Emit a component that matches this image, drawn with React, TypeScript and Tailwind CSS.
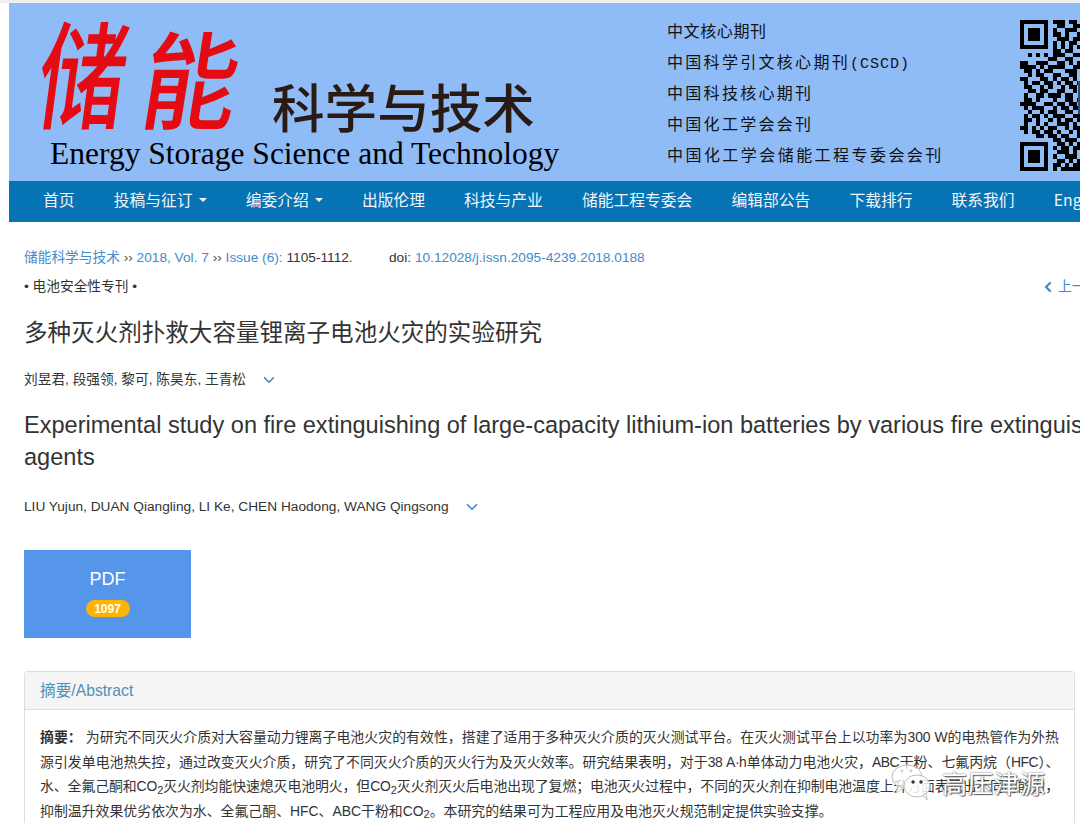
import { ChevronDown, ChevronLeft } from 'lucide-react';

const sansCn = 'font-["Liberation_Sans","Noto_Sans_CJK_SC",sans-serif]';

const navItems = [
  { label: '首页' },
  { label: '投稿与征订', caret: true },
  { label: '编委介绍', caret: true },
  { label: '出版伦理' },
  { label: '科技与产业' },
  { label: '储能工程专委会' },
  { label: '编辑部公告' },
  { label: '下载排行' },
  { label: '联系我们' },
  { label: 'English' },
];

// visible part of the QR code, the rest is cut off by the window
const qrRows = [
  '111111101110110',
  '100000100110011',
  '101110101001110',
  '101110101101001',
  '101110100111011',
  '100000101010110',
  '111111101010101',
  '000000001101100',
  '001010101110011',
  '000000011001100',
  '110011100110101',
  '111101011110011',
  '011010110001110',
  '001011001100110',
  '110001101011010',
  '010110110101101',
  '011001010010110',
  '001101100110010',
  '010011011101100',
  '011010001001101',
  '111100110110110',
  '010111001011011',
  '001001011001100',
  '010110101110011',
  '011010010101101',
  '010010100111010',
  '110101011001011',
  '010110110100101',
  '000011011011001',
  '000000001101110',
  '111111100110101',
  '100000101011011',
  '101110100111010',
  '101110101001110',
  '101110100110101',
  '100000101101011',
  '111111101011111',
];

function QrCode() {
  return (
    <svg width="61" height="151" viewBox="0 0 15 37" shapeRendering="crispEdges" className="shrink-0">
      {qrRows.map((row, y) =>
        row.split('').map((c, x) =>
          c === '1' ? <rect key={`${x}-${y}`} x={x} y={y} width="1" height="1" fill="#000" /> : null
        )
      )}
      <rect x="14.2" y="15" width="0.8" height="8" fill="#1f4f86" />
    </svg>
  );
}

function WechatMark() {
  return (
    <svg width="46" height="40" viewBox="0 0 46 40">
      <ellipse cx="19" cy="15" rx="15" ry="12" fill="#ffffff" fillOpacity="0.75" stroke="#bdbdbd" strokeWidth="1" />
      <path d="M10 24 L8 31 L16 26 Z" fill="#ffffff" fillOpacity="0.75" stroke="#bdbdbd" strokeWidth="1" />
      <ellipse cx="29" cy="24" rx="13" ry="11" fill="#ffffff" fillOpacity="0.85" stroke="#bdbdbd" strokeWidth="1" />
      <path d="M35 33 L39 38 L38 31 Z" fill="#ffffff" fillOpacity="0.85" stroke="#bdbdbd" strokeWidth="1" />
      <circle cx="14" cy="9" r="1.4" fill="#cfcfcf" />
      <circle cx="23" cy="9" r="1.4" fill="#cfcfcf" />
      <circle cx="25" cy="20" r="1.7" fill="#333333" />
      <circle cx="33" cy="20" r="1.7" fill="#333333" />
    </svg>
  );
}

function Sub2() {
  return <sub className="text-[11px]">2</sub>;
}

export default function App() {
  return (
    <div className={`relative h-[829px] w-[1080px] overflow-hidden bg-white ${sansCn}`}>
      <div className="h-[3px] bg-[#eeeeee]" />

      {/* Banner */}
      <div className="ml-[9px] w-[1100px]">
        <div className="flex h-[178px] bg-[#8fbbf6] pl-[31px]">
          <div className="w-[627px] shrink-0">
            <div className="flex h-[132px] items-end">
              <div className='flex h-[124px] w-[232px] shrink-0 items-center gap-[14px] pb-[6px] font-["Noto_Sans_CJK_SC",sans-serif] text-[88px] leading-none font-medium text-[#e60a12]'>
                <span className="origin-center [transform:scaleY(1.32)_skewX(-10deg)]">储</span>
                <span className="origin-center [transform:translate(6px,5px)_scaleX(1.08)_scaleY(1.2)_skewX(-10deg)]">能</span>
              </div>
              <div className='font-["Noto_Sans_CJK_SC",sans-serif] text-[52.6px] leading-[60px] font-medium text-[#2a1a14]'>
                科学与技术
              </div>
            </div>
            <div className='pl-[10px] font-["Liberation_Serif",serif] text-[31.5px] leading-[38px] whitespace-nowrap text-black'>
              Energy Storage Science and Technology
            </div>
          </div>

          <div className='flex w-[353px] shrink-0 flex-col pt-[12px] font-["Noto_Sans_CJK_SC",sans-serif] text-[16px] leading-[31px] text-[#111111]'>
            <div className="tracking-[0.6px]">中文核心期刊</div>
            <div className="h-[31px] tracking-[2.3px]">
              中国科学引文核心期刊
              <span className='font-["Liberation_Mono",monospace] text-[15px] leading-none tracking-[1px]'>(CSCD)</span>
            </div>
            <div className="tracking-[2.3px]">中国科技核心期刊</div>
            <div className="tracking-[2.3px]">中国化工学会会刊</div>
            <div className="tracking-[2.45px]">中国化工学会储能工程专委会会刊</div>
          </div>

          <div className="pt-[17px]">
            <QrCode />
          </div>
        </div>

        {/* Nav */}
        <nav className='flex h-[41px] items-center bg-[#0573b4] pb-[3px] pl-[14.5px] font-["Noto_Sans_CJK_SC",sans-serif] text-[15.75px] whitespace-nowrap text-[#f2f6fa]'>
          {navItems.map((item) => (
            <div key={item.label} className="flex items-center px-[19.6px]">
              {item.label}
              {item.caret && (
                <span className="ml-[6px] h-0 w-0 border-x-[4px] border-t-[4px] border-x-transparent border-t-[#f2f6fa]" />
              )}
            </div>
          ))}
        </nav>
      </div>

      {/* Article */}
      <div className="w-[1110px] pl-[24px] text-[#333333]">
        <div className="flex pt-[27px] text-[13.7px] leading-[17px] whitespace-nowrap">
          <div className="w-[365px] text-[#428bca]">
            储能科学与技术 <span className="text-[#555555]">››</span> 2018, Vol. 7 <span className="text-[#555555]">››</span> Issue (6):{' '}
            <span className="text-[#333333]">1105-1112.</span>
          </div>
          <div>
            doi: <span className="text-[#428bca]">10.12028/j.issn.2095-4239.2018.0188</span>
          </div>
        </div>

        <div className="flex items-center justify-between pt-[12px] text-[13.7px] leading-[17px]">
          <div>• 电池安全性专刊 •</div>
          <div className="flex w-[68px] items-center text-[#428bca]">
            <ChevronLeft size={16} strokeWidth={3.5} className="-ml-[2px]" />
            <span className="ml-[2px] whitespace-nowrap">上一篇</span>
          </div>
        </div>

        <h1 className="pt-[20px] text-[23.55px] leading-[36px] font-normal">多种灭火剂扑救大容量锂离子电池火灾的实验研究</h1>

        <div className="flex items-center gap-[14px] pt-[19px] text-[13.7px] leading-[20px]">
          刘昱君, 段强领, 黎可, 陈昊东, 王青松
          <ChevronDown size={18} strokeWidth={2.2} className="text-[#428bca]" />
        </div>

        <h2 className="w-[1125px] pt-[19px] text-[23.55px] leading-[32px] font-normal">
          Experimental study on fire extinguishing of large-capacity lithium-ion batteries by various fire extinguishing agents
        </h2>

        <div className="flex items-center gap-[14px] pt-[24px] text-[13.7px] leading-[20px]">
          LIU Yujun, DUAN Qiangling, LI Ke, CHEN Haodong, WANG Qingsong
          <ChevronDown size={18} strokeWidth={2.2} className="text-[#428bca]" />
        </div>

        <div className="mt-[33px] flex h-[88px] w-[167px] flex-col items-center bg-[#5596ea] pt-[18px]">
          <div className="text-[18px] leading-[22px] text-white">PDF</div>
          <div className="mt-[10px] flex h-[17px] w-[44px] items-center justify-center rounded-full bg-[#ffb400] text-[12px] font-bold text-white">
            1097
          </div>
        </div>

        <div className="mt-[33px] w-[1051px] rounded-t-[4px] border border-b-0 border-[#dddddd]">
          <div className="flex h-[38px] items-center border-b border-[#dddddd] bg-[#f5f5f5] px-[15px] text-[15.7px] text-[#4f90b8]">
            摘要/Abstract
          </div>
          {/* full-width punctuation written as escapes; lines are set by hand to break where the reference does */}
          <div className="px-[15px] pt-[15px] text-[13.9px] leading-[24.5px]">
            <p className="text-justify [text-align-last:justify]">
              <b className="mr-[4px]">{'摘要\uFF1A'}</b>
              {'为研究不同灭火介质对大容量动力锂离子电池火灾的有效性\uFF0C搭建了适用于多种灭火介质的灭火测试平台\u3002在灭火测试平台上以功率为300 W的电热管作为外热'}
            </p>
            <p className="text-justify tracking-[-0.45px] [text-align-last:justify]">
              {'源引发单电池热失控\uFF0C通过改变灭火介质\uFF0C研究了不同灭火介质的灭火行为及灭火效率\u3002研究结果表明\uFF0C对于38 A\u00B7h单体动力电池火灾\uFF0CABC干粉\u3001七氟丙烷\uFF08HFC\uFF09\u3001'}
            </p>
            <p className="text-justify tracking-[-0.1px] [text-align-last:justify]">
              {'水\u3001全氟己酮和CO'}
              <Sub2 />
              {'灭火剂均能快速熄灭电池明火\uFF0C但CO'}
              <Sub2 />
              {'灭火剂灭火后电池出现了复燃\uFF1B电池灭火过程中\uFF0C不同的灭火剂在抑制电池温度上升方面表现出不同的能力\uFF0C'}
            </p>
            <p>
              {'抑制温升效果优劣依次为水\u3001全氟己酮\u3001HFC\u3001ABC干粉和CO'}
              <Sub2 />
              {'\u3002本研究的结果可为工程应用及电池灭火规范制定提供实验支撑\u3002'}
            </p>
          </div>
        </div>
      </div>

      {/* Watermark over the abstract */}
      <div className="absolute top-[762px] left-[888px] flex items-center gap-[8px]">
        <WechatMark />
        <span className='font-["Noto_Sans_CJK_SC",sans-serif] text-[25px] leading-none tracking-[1px] whitespace-nowrap text-white [text-shadow:0_0_2px_#555555,1px_1px_1px_#666666]'>
          高压津源
        </span>
      </div>
    </div>
  );
}
